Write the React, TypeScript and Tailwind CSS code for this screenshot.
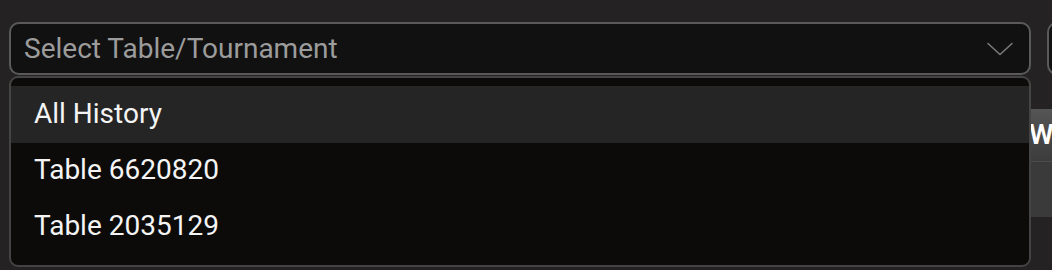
const options = ["All History", "Table 6620820", "Table 2035129"];

function Chevron() {
  return (
    <svg width="26" height="14" viewBox="0 0 26 14" fill="none" className="text-[#7a7a7a]">
      <path d="M1 1.5 L13 12.5 L25 1.5" stroke="currentColor" strokeWidth="1.6" strokeLinecap="round" strokeLinejoin="round" />
    </svg>
  );
}

export default function App() {
  return (
    <div
      className="relative w-[1052px] h-[270px] overflow-hidden bg-[#242223] pt-[22px] pl-[9px]"
      style={{ fontFamily: "Roboto, 'Noto Sans', sans-serif" }}
    >
      <div className="flex gap-[16px]">
        <div className="flex items-center justify-between w-[1022px] h-[53px] shrink-0 rounded-[10px] border-2 border-[#5a5a5a] bg-[#111111] pl-[13px] pr-[16px]">
          <span className="text-[28px] leading-none text-[#9c9c9c]">
            Select Table/Tournament
          </span>
          <Chevron />
        </div>
        <div className="w-[200px] h-[53px] shrink-0 rounded-[10px] border-2 border-[#5a5a5a] bg-[#111111]" />
      </div>

      <div className="mt-[34px] w-[1100px]">
        <div className="flex items-center h-[53px] bg-gradient-to-b from-[#555555] to-[#3c3c3c] border-b border-[#4c4c4c]">
          <div className="w-[1020px] shrink-0" />
          <span className="text-[28px] font-semibold text-white">W</span>
        </div>
        <div className="h-[55px] bg-[#3a3a3a]" />
      </div>

      <div className="absolute top-[76px] left-[9px] w-[1022px] h-[191px] rounded-[9px] border-2 border-[#444444] bg-[#0c0b0a] pt-[8px] overflow-hidden">
        {options.map((opt, i) => (
          <div
            key={opt}
            className={`flex items-center pl-[23px] pb-[2px] text-[28px] leading-none text-[#f4f4f4] ${
              i === 0 ? "h-[57px] bg-[#252525]" : "h-[56px]"
            }`}
          >
            {opt}
          </div>
        ))}
      </div>
    </div>
  );
}
